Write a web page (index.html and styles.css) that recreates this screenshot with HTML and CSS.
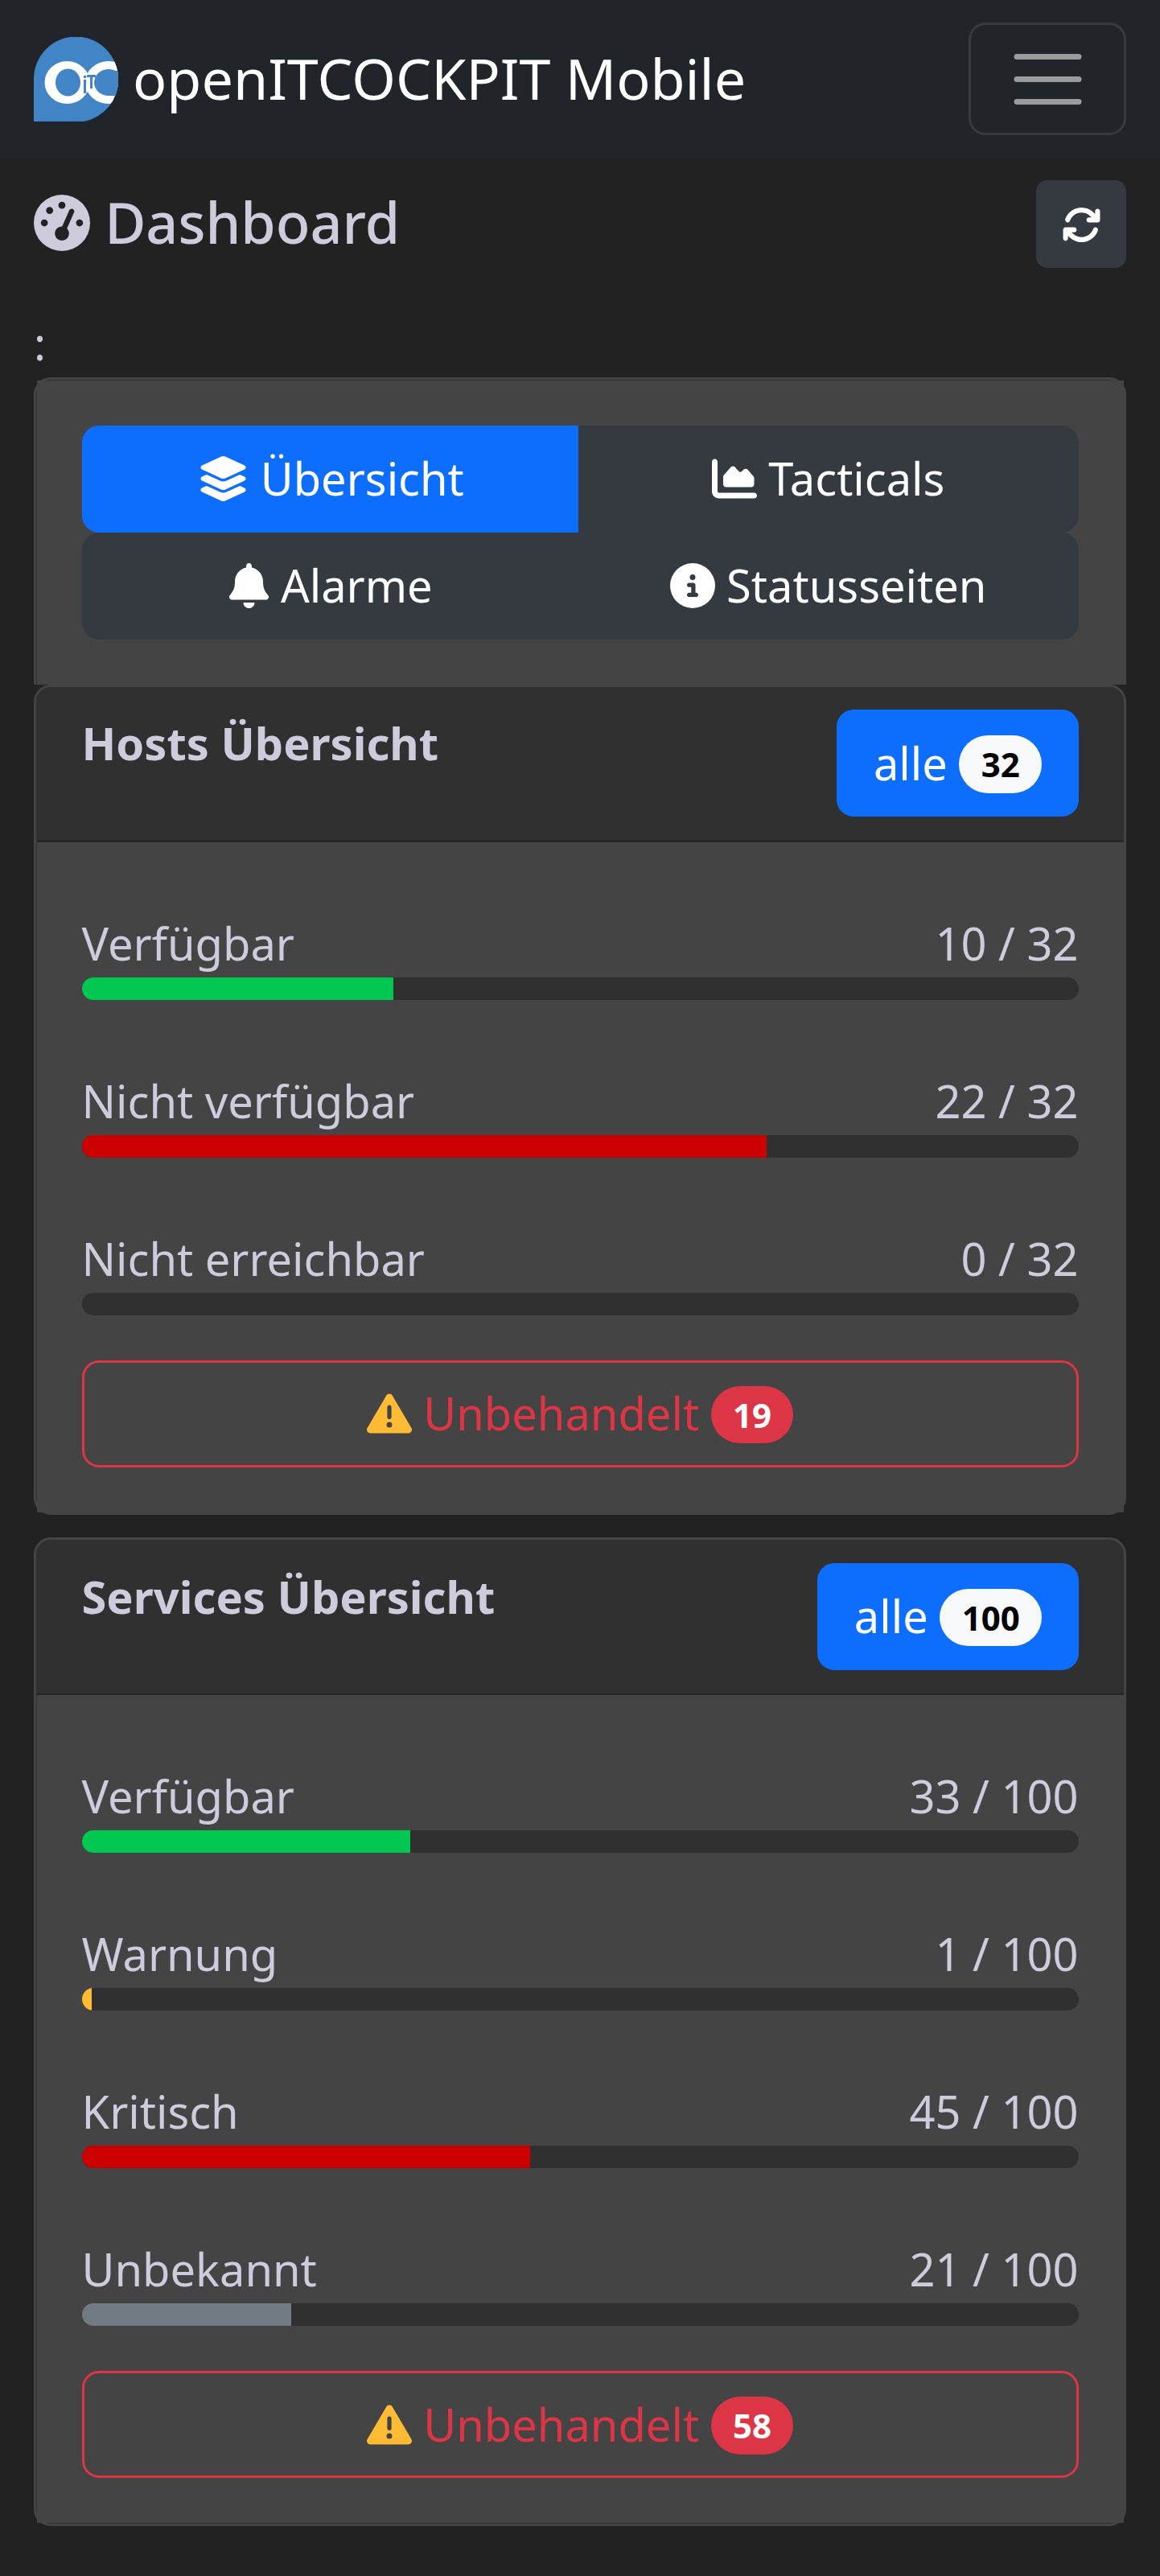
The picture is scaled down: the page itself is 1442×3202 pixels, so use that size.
FILE: index.html
```html
<!DOCTYPE html>
<html lang="de">
<head>
<meta charset="utf-8">
<title>openITCOCKPIT Mobile</title>
<link rel="stylesheet" href="styles.css">
</head>
<body>
<svg class="sprite" aria-hidden="true">
  <symbol id="warn" viewBox="0 0 512 512"><path d="M256 32c14.2 0 27.3 7.5 34.5 19.8l216 368c7.3 12.4 7.3 27.7 .2 40.1S486.3 480 472 480H40c-14.3 0-27.6-7.7-34.7-20.1s-7-27.8 .2-40.1l216-368C228.7 39.5 241.8 32 256 32zm0 128c-13.3 0-24 10.7-24 24V296c0 13.3 10.7 24 24 24s24-10.7 24-24V184c0-13.3-10.7-24-24-24zm32 224a32 32 0 1 0 -64 0 32 32 0 1 0 64 0z"/></symbol>
</svg>
<nav class="navbar">
  <a class="brand">
    <svg class="logo" viewBox="0 0 105 105">
      <defs><clipPath id="drop"><path d="M0 105V52A52.500 52.500 0 0 1 105 52A52.500 52.500 0 0 1 62 105Z"/></clipPath></defs>
      <g clip-path="url(#drop)">
        <rect width="105" height="105" fill="#4285c6"/>
        <g fill="#fff">
          <ellipse cx="41.500" cy="56.500" rx="28" ry="26.500"/>
          <ellipse cx="93" cy="56.500" rx="29" ry="26.500"/>
        </g>
        <g fill="#4285c6">
          <ellipse cx="42.500" cy="56.500" rx="15.500" ry="17"/>
          <ellipse cx="93" cy="56.500" rx="18" ry="16.500"/>
          <path d="M93 42h12v31H93z"/>
          <path d="M62 53h3v17h-3zM62 48h3v3h-3zM66 47h11v3h-4v14h-3V50h-4z"/>
        </g>
      </g>
    </svg>
    <span>openITCOCKPIT Mobile</span>
  </a>
  <button class="toggler" aria-label="Menu">
    <svg viewBox="0 0 30 30"><path stroke="#9b9c9e" stroke-linecap="round" stroke-miterlimit="10" stroke-width="2" d="M4 7h22M4 15h22M4 23h22"/></svg>
  </button>
</nav>
<main class="container">
  <header class="page-head">
    <h1><svg class="icon" viewBox="0 0 512 512"><path d="M0 256a256 256 0 1 1 512 0A256 256 0 1 1 0 256zM288 96a32 32 0 1 0 -64 0 32 32 0 1 0 64 0zM256 416c35.3 0 64-28.7 64-64c0-17.4-6.9-33.1-18.1-44.600L366 161.700c5.300-12.100-.2-26.300-12.300-31.600s-26.300 .2-31.600 12.300L257.900 288c-.6 0-1.300 0-1.900 0c-35.300 0-64 28.700-64 64s28.700 64 64 64zM176 144a32 32 0 1 0 -64 0 32 32 0 1 0 64 0zM96 288a32 32 0 1 0 0-64 32 32 0 1 0 0 64zm352-32a32 32 0 1 0 -64 0 32 32 0 1 0 64 0z"/></svg> Dashboard</h1>
    <button class="refresh" aria-label="Aktualisieren"><svg class="icon" viewBox="0 0 512 512"><path d="M105.1 202.6c7.7-21.8 20.2-42.3 37.8-59.8c62.5-62.5 163.8-62.5 226.3 0L386.3 160H352c-17.7 0-32 14.3-32 32s14.3 32 32 32H463.5h.4c17.7 0 32-14.3 32-32V80c0-17.7-14.3-32-32-32s-32 14.3-32 32v35.2L414.4 97.6c-87.5-87.5-229.3-87.5-316.8 0C73.2 122 55.6 150.7 44.8 181.4c-5.9 16.7 2.9 34.9 19.5 40.8s34.9-2.9 40.8-19.500zM39 289.3c-5 1.5-9.8 4.2-13.7 8.2c-4 4-6.7 8.8-8.1 14c-.3 1.2-.6 2.5-.8 3.8c-.3 1.7-.4 3.4-.4 5.100V432c0 17.700 14.300 32 32 32s32-14.300 32-32V396.900l17.600 17.500c87.500 87.400 229.300 87.400 316.700 0c24.400-24.400 42.100-53.100 52.900-83.700c5.900-16.700-2.900-34.900-19.500-40.800s-34.900 2.900-40.800 19.500c-7.700 21.800-20.200 42.300-37.800 59.800c-62.500 62.500-163.800 62.500-226.300 0l-.1-.1L125.600 352H160c17.700 0 32-14.300 32-32s-14.300-32-32-32H48.400c-1.600 0-3.200 .1-4.800 .3s-3.100 .5-4.600 1z"/></svg></button>
  </header>
  <p class="label">:</p>

  <section class="card card-tabs">
    <div class="card-body">
      <div class="tabs">
        <button class="btn active"><svg class="icon icon-wide" viewBox="0 0 576 512"><path d="M264.5 5.2c14.9-6.9 32.1-6.9 47 0l218.6 101c8.5 3.9 13.9 12.4 13.9 21.8s-5.4 17.9-13.9 21.8l-218.6 101c-14.9 6.9-32.1 6.9-47 0L45.9 149.8C37.4 145.8 32 137.3 32 128s5.4-17.9 13.9-21.8L264.5 5.2zM476.9 209.6l53.2 24.6c8.5 3.9 13.9 12.4 13.9 21.8s-5.4 17.9-13.9 21.8l-218.6 101c-14.9 6.9-32.1 6.9-47 0L45.9 277.8C37.4 273.8 32 265.3 32 256s5.4-17.9 13.9-21.8l53.2-24.6 152 70.2c23.4 10.8 50.4 10.8 73.8 0l152-70.2zm-152 198.2l152-70.2 53.2 24.6c8.5 3.9 13.9 12.4 13.9 21.8s-5.4 17.9-13.9 21.8l-218.6 101c-14.9 6.9-32.1 6.9-47 0L45.9 405.8C37.4 401.8 32 393.3 32 384s5.4-17.9 13.9-21.8l53.2-24.6 152 70.2c23.4 10.8 50.4 10.8 73.8 0z"/></svg> Übersicht</button>
        <button class="btn"><svg class="icon" viewBox="0 0 512 512"><path d="M64 64c0-17.7-14.3-32-32-32S0 46.3 0 64V400c0 44.2 35.8 80 80 80H480c17.7 0 32-14.3 32-32s-14.3-32-32-32H80c-8.8 0-16-7.2-16-16V64zm96 288H448c17.7 0 32-14.3 32-32V251.8c0-7.6-2.7-15-7.7-20.8l-65.8-76.8c-12.1-14.2-33.7-15-46.9-1.8l-21 21c-10 10-26.4 9.2-35.4-1.6l-39.2-47c-12.6-15.1-35.7-15.4-48.7-.6L135.9 215c-5.1 5.8-7.9 13.3-7.9 21.1v84c0 17.7 14.3 32 32 32z"/></svg> Tacticals</button>
        <button class="btn"><svg class="icon icon-narrow" viewBox="0 0 448 512"><path d="M224 0c-17.7 0-32 14.3-32 32V51.2C119 66 64 130.6 64 208v18.8c0 47-17.3 92.4-48.5 127.6l-7.4 8.3c-8.4 9.4-10.4 22.9-5.3 34.4S19.4 416 32 416H416c12.6 0 24-7.4 29.2-18.9s3.1-25-5.3-34.4l-7.4-8.3C401.3 319.2 384 273.9 384 226.8V208c0-77.4-55-142-128-156.8V32c0-17.7-14.3-32-32-32zm45.3 493.3c12-12 18.7-28.3 18.7-45.3H224 160c0 17 6.7 33.3 18.7 45.3s28.3 18.7 45.3 18.7s33.3-6.7 45.3-18.7z"/></svg> Alarme</button>
        <button class="btn"><svg class="icon" viewBox="0 0 512 512"><path d="M256 512A256 256 0 1 0 256 0a256 256 0 1 0 0 512zM216 336h24V272H216c-13.3 0-24-10.7-24-24s10.7-24 24-24h48c13.3 0 24 10.7 24 24v88h8c13.3 0 24 10.7 24 24s-10.7 24-24 24H216c-13.3 0-24-10.7-24-24s10.7-24 24-24zm40-208a32 32 0 1 1 0 64 32 32 0 1 1 0-64z"/></svg> Statusseiten</button>
      </div>
    </div>
  </section>

  <section class="card">
    <div class="card-header">
      <h2>Hosts Übersicht</h2>
      <button class="btn btn-all">alle <span class="badge badge-light">32</span></button>
    </div>
    <div class="card-body">
      <div class="stat"><div class="stat-text"><span>Verfügbar</span><span>10 / 32</span></div><div class="progress"><div class="bar ok" style="width:31.25%"></div></div></div>
      <div class="stat"><div class="stat-text"><span>Nicht verfügbar</span><span>22 / 32</span></div><div class="progress"><div class="bar critical" style="width:68.75%"></div></div></div>
      <div class="stat"><div class="stat-text"><span>Nicht erreichbar</span><span>0 / 32</span></div><div class="progress"></div></div>
      <button class="btn btn-unhandled"><svg class="icon warn-icon"><use href="#warn"/></svg> Unbehandelt <span class="badge badge-danger">19</span></button>
    </div>
  </section>

  <section class="card card-services">
    <div class="card-header">
      <h2>Services Übersicht</h2>
      <button class="btn btn-all">alle <span class="badge badge-light">100</span></button>
    </div>
    <div class="card-body">
      <div class="stat"><div class="stat-text"><span>Verfügbar</span><span>33 / 100</span></div><div class="progress"><div class="bar ok" style="width:33%"></div></div></div>
      <div class="stat"><div class="stat-text"><span>Warnung</span><span>1 / 100</span></div><div class="progress"><div class="bar warning" style="width:1%"></div></div></div>
      <div class="stat"><div class="stat-text"><span>Kritisch</span><span>45 / 100</span></div><div class="progress"><div class="bar critical" style="width:45%"></div></div></div>
      <div class="stat"><div class="stat-text"><span>Unbekannt</span><span>21 / 100</span></div><div class="progress"><div class="bar unknown" style="width:21%"></div></div></div>
      <button class="btn btn-unhandled"><svg class="icon warn-icon"><use href="#warn"/></svg> Unbehandelt <span class="badge badge-danger">58</span></button>
    </div>
  </section>
</main>
</body>
</html>
```
FILE: styles.css
```css
* { box-sizing: border-box; }

body {
  margin: 0;
  min-height: 3202px;
  background: #222;
  color: #cecbdd;
  font: 400 56px/84px "Noto Sans", sans-serif;
}

h1, h2, p { margin: 0; }
button { font: inherit; color: inherit; cursor: pointer; }
.sprite { display: none; }

.icon {
  width: 1em;
  height: 1em;
  vertical-align: -0.125em;
  fill: currentColor;
}
.icon-wide { width: 1.125em; }
.icon-narrow { width: 0.875em; }

.navbar {
  display: flex;
  justify-content: space-between;
  align-items: center;
  height: 196px;
  padding: 0 42px;
  background: #212529;
}
.brand {
  display: flex;
  align-items: center;
  gap: 18px;
  color: #fff;
  font-size: 70px;
  line-height: 105px;
}
.brand span { padding-bottom: 2px; }
.logo { width: 105px; height: 105px; }
.toggler {
  display: flex;
  align-items: center;
  justify-content: center;
  width: 196px;
  height: 140px;
  padding: 0;
  background: none;
  border: 3px solid #373b3e;
  border-radius: 21px;
}
.toggler svg { width: 105px; height: 105px; }

.container { padding: 28px 42px 0; }
.page-head {
  display: flex;
  justify-content: space-between;
  align-items: flex-start;
  height: 161px;
}
.page-head h1 {
  padding-top: 10px;
  font-size: 70px;
  font-weight: 500;
  line-height: 84px;
}
.refresh {
  width: 112px;
  height: 109px;
  padding: 2px 0 0;
  border: 0;
  border-radius: 14px;
  background: #343a40;
  color: #fff;
  font-size: 49px;
  line-height: 73px;
}
.label { height: 84px; line-height: 82px; }

.card {
  padding: 0.5px;
  background: #303030;
  border: 3px solid #444;
  border-radius: 21px;
}
.card-tabs {
  border-bottom: 0;
  padding-bottom: 0;
  border-radius: 21px 21px 0 0;
}
.card-services { margin-top: 28px; }
.card-header {
  display: flex;
  justify-content: space-between;
  align-items: flex-start;
  height: 192.5px;
  padding: 28px 56px 0;
  border-bottom: 3px solid #282828;
}
.card-header h2 { font-size: 56px; font-weight: 700; line-height: 82px; }
.card-body { padding: 56px; background: #444; }

.btn {
  height: 133px;
  padding: 0 42px 2px;
  border: 3px solid #343a40;
  border-radius: 21px;
  background: #343a40;
  color: #fff;
  line-height: 84px;
  white-space: nowrap;
}
.tabs { display: grid; grid-template-columns: 617px 1fr; }
.tabs .btn:nth-child(odd) { padding-left: 45px; border-radius: 21px 0 0 21px; }
.tabs .btn:nth-child(even) { border-radius: 0 21px 21px 0; }
.tabs .active, .btn-all { background: #0d6efd; border-color: #0d6efd; }
.btn-all { padding: 0 42.5px 2px; }
.btn-unhandled {
  display: block;
  width: 100%;
  background: none;
  border-color: #dc3545;
  color: #dc3545;
}
.warn-icon { color: #fb3; }

.badge {
  display: inline-block;
  padding: 14.7px 27.3px;
  border-radius: 36px;
  font-size: 42px;
  font-weight: 700;
  line-height: 42px;
  vertical-align: 3.5px;
}
.badge-light { background: #f8f9fa; color: #000; }
.badge-danger { background: #dc3545; color: #fff; }

.stat { padding: 28px 0 56px; }
.stat-text {
  display: flex;
  justify-content: space-between;
  height: 84px;
  line-height: 82px;
}
.progress {
  height: 28px;
  overflow: hidden;
  border-radius: 14px;
  background: #303030;
}
.bar { height: 100%; }
.ok { background: #00c851; }
.warning { background: #fb3; }
.critical { background: #c00; }
.unknown { background: #727b84; }
```
